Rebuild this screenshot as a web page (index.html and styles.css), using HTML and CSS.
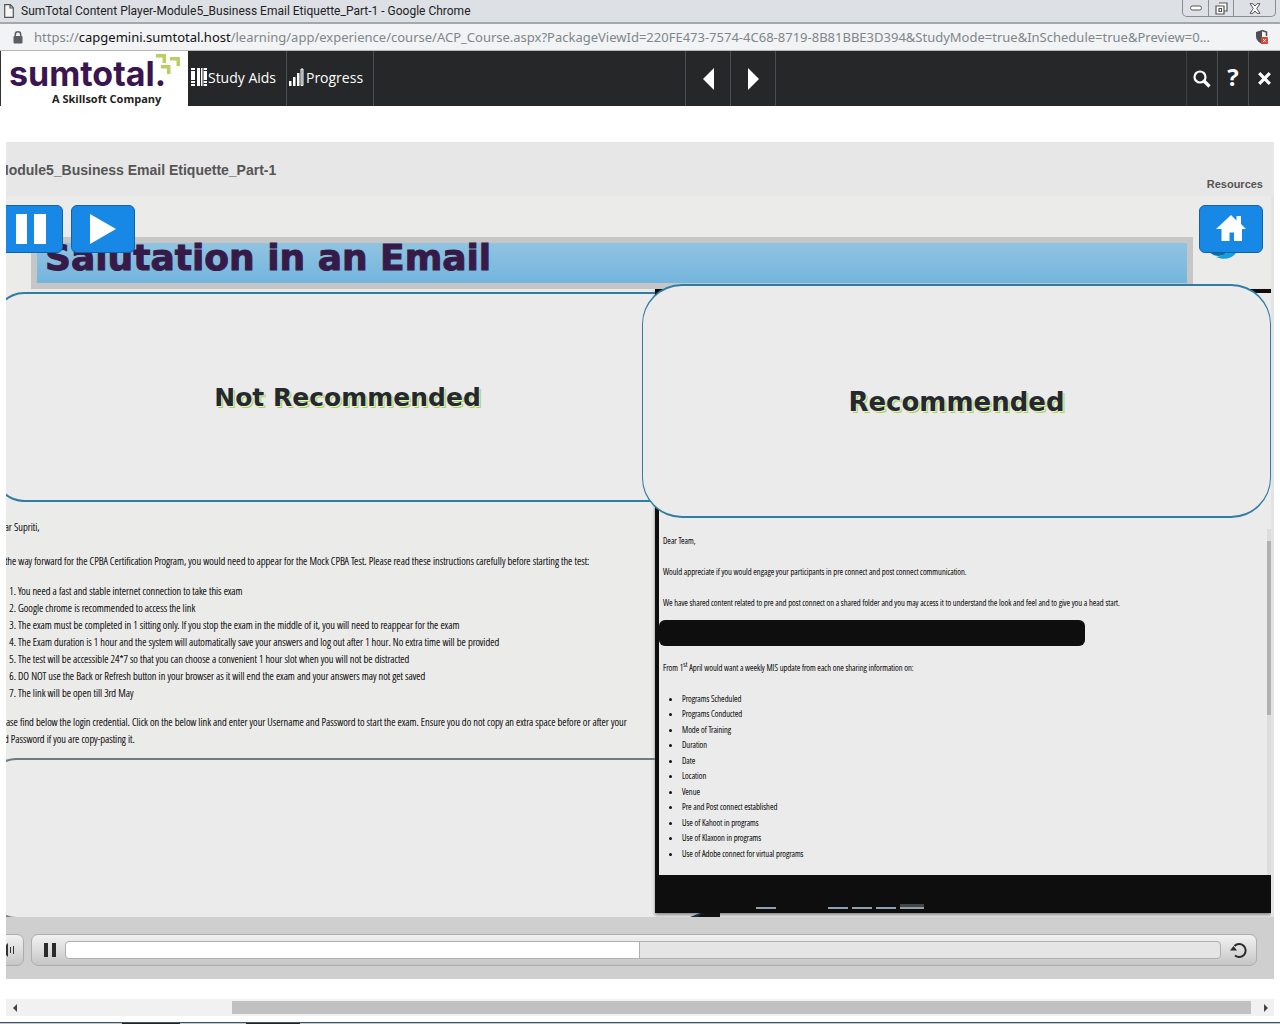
FILE: index.html
```html
<!DOCTYPE html>
<html lang="en">
<head>
<meta charset="utf-8">
<title>SumTotal Content Player-Module5_Business Email Etiquette_Part-1</title>
<link rel="stylesheet" href="styles.css">
</head>
<body>
<div class="window">
  <header class="titlebar">
    <svg class="page-icon" width="10" height="14" viewBox="0 0 10 14"><path d="M.7.7h5.6l3 3v9.6H.7z M6 .7v3.3h3.3" fill="#f6f6f6" stroke="#555" stroke-width="1.2"/></svg>
    <span class="window-title">SumTotal Content Player-Module5_Business Email Etiquette_Part-1 - Google Chrome</span>
    <div class="window-buttons">
      <button type="button" aria-label="Minimize"><svg width="12" height="6" viewBox="0 0 12 6"><rect x=".7" y="1" width="10.6" height="4" rx="1.5" fill="#fff" stroke="#555"/></svg></button>
      <button type="button" aria-label="Restore"><svg width="13" height="13" viewBox="0 0 13 13"><path d="M4 1h8v8H9M1 4h8v8H1zM4 6.500h2.500v3H4z" fill="#fff" stroke="#555" stroke-width="1.200"/></svg></button>
      <button type="button" class="wide" aria-label="Close window"><svg width="12" height="11" viewBox="0 0 12 11"><path d="M1 .7h3L6 3 8 .7h3L7.700 5.500 11 10.300H8L6 8l-2 2.300H1l3.300-4.800z" fill="#fff" stroke="#555"/></svg></button>
    </div>
  </header>

  <div class="address">
    <svg width="10" height="13" viewBox="0 0 10 13"><path d="M2.300 6V3.500a2.700 2.700 0 0 1 5.400 0V6" fill="none" stroke="#5a5d61" stroke-width="1.500"/><rect x=".5" y="5" width="9" height="7.500" rx="1" fill="#5a5d61"/></svg>
    <span class="url">https://<b>capgemini.sumtotal.host</b>/learning/app/experience/course/ACP_Course.aspx?PackageViewId=220FE473-7574-4C68-8719-8B81BBE3D394&amp;StudyMode=true&amp;InSchedule=true&amp;Preview=0...</span>
    <svg width="14" height="16" viewBox="0 0 14 16"><path d="M7 1 1 3v4c0 4 2.500 6 6 8z" fill="#4c4f53"/><path d="M7 1.500 11.500 3v4" fill="none" stroke="#4c4f53" stroke-width="1.500"/><rect x="6" y="8" width="7" height="7" rx="1" fill="#dc4437"/><path d="m8 10 3 3m0-3-3 3" stroke="#fff"/></svg>
  </div>

  <nav class="toolbar">
    <a class="brand" href="#" aria-label="SumTotal home">
      <span class="brand-name">sumtotal.</span>
      <span class="brand-sub">A Skillsoft Company</span>
      <svg class="brand-mark" width="26" height="22" viewBox="0 0 26 22"><path d="M1 1h10v9H7.500V4.500H1zM15 4h10v9h-3.500V7.500H15zM6 12h9.500v9H12v-5.500H6z" fill="#b9cf62"/></svg>
    </a>
    <button type="button" class="tool study"><svg width="17" height="18" viewBox="0 0 17 18"><path d="M0 0h4v18H0zM6 0h3v18H6zM10 0h1.500v18H10zM12.500 0h3.500v18h-3.500z" fill="#fff"/><path d="M0 2.500h4M0 12.500h4M0 15.500h4M12.500 2.500H16M12.500 12.500H16M12.500 15.500H16" stroke="#262729"/></svg>Study Aids</button>
    <button type="button" class="tool progress"><svg width="15" height="18" viewBox="0 0 15 18"><path d="M0 13h2.500v5H0zM4 9h2.500v9H4zM8 5h2.500v13H8z" fill="#fff"/><path d="M12 1h2v16.500h-2z" fill="#777" stroke="#fff"/></svg>Progress</button>
    <div class="pager">
      <button type="button" class="tool step" aria-label="Previous"><svg width="11" height="22" viewBox="0 0 11 22"><path d="M11 0v22L0 11z" fill="#fff"/></svg></button>
      <button type="button" class="tool step" aria-label="Next"><svg width="11" height="22" viewBox="0 0 11 22"><path d="M0 0v22l11-11z" fill="#fff"/></svg></button>
    </div>
    <div class="utilities">
      <button type="button" class="tool" aria-label="Search"><svg width="18" height="18" viewBox="0 0 18 18"><circle cx="7" cy="7" r="5.500" fill="none" stroke="#fff" stroke-width="2.200"/><path d="m11 11 5.500 5.500" stroke="#fff" stroke-width="3.200"/></svg></button>
      <button type="button" class="tool help" aria-label="Help">?</button>
      <button type="button" class="tool" aria-label="Close"><svg width="13" height="13" viewBox="0 0 13 13"><path d="m1.200 1.200 10.600 10.600m0-10.600L1.200 11.800" stroke="#fff" stroke-width="3.200"/></svg></button>
    </div>
  </nav>

  <main class="player">
    <div class="player-head">
      <h1>Module5_Business Email Etiquette_Part-1</h1>
      <a href="#">Resources</a>
    </div>

    <section class="slide">
      <h2 class="banner">Salutation in an Email</h2>
      <div class="columns">
        <article class="column left">
          <div class="card card-left"><h3>Not Recommended</h3></div>
          <div class="mail">
            <p class="cut">Dear Supriti,</p>
            <p class="cut as">As the way forward for the CPBA Certification Program, you would need to appear for the Mock CPBA Test. Please read these instructions carefully before starting the test:</p>
            <ol>
              <li>You need a fast and stable internet connection to take this exam</li>
              <li>Google chrome is recommended to access the link</li>
              <li>The exam must be completed in 1 sitting only. If you stop the exam in the middle of it, you will need to reappear for the exam</li>
              <li>The Exam duration is 1 hour and the system will automatically save your answers and log out after 1 hour. No extra time will be provided</li>
              <li>The test will be accessible 24*7 so that you can choose a convenient 1 hour slot when you will not be distracted</li>
              <li>DO NOT use the Back or Refresh button in your browser as it will end the exam and your answers may not get saved</li>
              <li>The link will be open till 3rd May</li>
            </ol>
            <p class="cut">Please find below the login credential. Click on the below link and enter your Username and Password to start the exam. Ensure you do not copy an extra space before or after your<br>and Password if you are copy-pasting it.</p>
          </div>
          <div class="card card-empty"></div>
        </article>
        <article class="column right">
          <div class="mail mail-right">
            <p>Dear Team,</p>
            <p>Would appreciate if you would engage your participants in pre connect and post connect communication.</p>
            <p>We have shared content related to pre and post connect on a shared folder and you may access it to understand the look and feel and to give you a head start.</p>
            <div class="redacted"></div>
            <p>From 1<sup>st</sup> April would want a weekly MIS update from each one sharing information on:</p>
            <ul>
              <li>Programs Scheduled</li>
              <li>Programs Conducted</li>
              <li>Mode of Training</li>
              <li>Duration</li>
              <li>Date</li>
              <li>Location</li>
              <li>Venue</li>
              <li>Pre and Post connect established</li>
              <li>Use of Kahoot in programs</li>
              <li>Use of Klaxoon in programs</li>
              <li>Use of Adobe connect for virtual programs</li>
            </ul>
            <div class="mail-scroll"><i></i></div>
          </div>
          <div class="taskbar"><i></i><i></i><i></i><i></i><i class="current"></i></div>
          <div class="card card-right"><h3>Recommended</h3></div>
        </article>
      </div>
      <svg class="corner" width="40" height="4" viewBox="0 0 40 4"><path d="M0 4 10 0h8v4z" fill="#12314f"/><path d="M8 4 12 0h18v4z" fill="#111"/></svg>
      <svg class="swirl" width="34" height="16" viewBox="0 0 34 16"><path d="M1 8c6 6 12 6 18 3l-4-6z" fill="#0c6ca5"/><path d="M9 14c8-1 10-6 21-6-3 7-12 10-21 6z" fill="#12a0dc"/></svg>
      <button type="button" class="over pause" aria-label="Pause"><svg width="30" height="30" viewBox="0 0 30 30"><path d="M0 0h11v30H0zM18 0h12v30H18z" fill="#fff"/></svg></button>
      <button type="button" class="over play" aria-label="Play"><svg width="26" height="30" viewBox="0 0 26 30"><path d="m0 0 26 15L0 30z" fill="#fff"/></svg></button>
      <button type="button" class="over home" aria-label="Home"><svg width="30" height="28" viewBox="0 0 30 28"><path d="M15 0 0 14h5.500v12h8v-8.500h4.500V26h8V14H30l-5-5V1h-4.500v4.500z" fill="#fff"/></svg></button>
    </section>

    <footer class="controls">
      <button type="button" class="volume" aria-label="Volume"><svg width="14" height="14" viewBox="0 0 14 14"><path d="M0 4h3l4-4v14l-4-4H0z" fill="#333"/><path d="M9.500 4v6M12.500 3v8" stroke="#333"/></svg></button>
      <div class="seekbar">
        <button type="button" aria-label="Pause"><svg width="12" height="15" viewBox="0 0 12 15"><path d="M0 0h4v14H0zM8 0h4v14H8z" fill="#2b2b2b"/></svg></button>
        <input type="range" min="0" max="1000" value="497" aria-label="Seek">
        <button type="button" aria-label="Replay"><svg width="18" height="17" viewBox="0 0 18 17"><path d="M4.500 4A6.500 6.500 0 1 1 5 13.500" fill="none" stroke="#2b2b2b" stroke-width="2"/><path d="M0 8.500 3.500 4 7 8.500z" fill="#2b2b2b"/></svg></button>
      </div>
    </footer>
  </main>

  <div class="hscroll">
    <button type="button" aria-label="Scroll left"><svg width="4" height="8" viewBox="0 0 4 8"><path d="M4 0v8L0 4z" fill="#444"/></svg></button>
    <div class="track"><div class="thumb"></div></div>
    <button type="button" aria-label="Scroll right"><svg width="4" height="8" viewBox="0 0 4 8"><path d="M0 0v8l4-4z" fill="#444"/></svg></button>
  </div>
  <div class="desktop-edge"></div>
</div>
</body>
</html>
```
FILE: styles.css
```css
* { box-sizing: border-box; }
body { margin: 0; background: #fff; font-family: "Open Sans", "Noto Sans", sans-serif; color: #222; }
button { margin: 0; padding: 0; border: 0; background: none; color: inherit; font: inherit; display: flex; align-items: center; justify-content: center; }
svg { display: block; flex: none; }
h1, h2, h3, p, ol, ul { margin: 0; padding: 0; }
.window { overflow: hidden; }

.titlebar { display: flex; align-items: center; height: 24px; padding: 0 4px; gap: 7px; background: #dde0e5; border-bottom: 2px solid #a5a8ab; }
.window-title { flex: 1; font: 12px Roboto, sans-serif; white-space: nowrap; }
.window-buttons { display: flex; align-self: flex-start; height: 17px; border: 1px solid #8b8e93; border-top: 0; border-radius: 0 0 5px 5px; }
.window-buttons button { width: 25px; }
.window-buttons button + button { border-left: 1px solid #8b8e93; }
.window-buttons .wide { width: 42px; }

.address { display: flex; align-items: center; height: 27px; padding: 0 11px 0 13px; gap: 11px; background: #f1f3f4; border-bottom: 1px solid #b6b8ba; }
.url { flex: 1; font: 13px "Noto Sans", sans-serif; color: #80868b; white-space: nowrap; }
.url b { font-weight: 400; color: #111; }

.toolbar { display: flex; height: 55px; background: #262729; color: #fff; font-size: 14px; }
.brand { position: relative; width: 188px; padding: 5px 0 0 8px; border-left: 1px solid #333; background: #fff; color: #3b1550; text-decoration: none; }
.brand-name { display: block; font: 700 34px/36px Inter, sans-serif; }
.brand-sub { display: block; padding-left: 43px; font: 700 11px/14px "Open Sans", sans-serif; color: #222; }
.brand-mark { position: absolute; right: 7px; top: 2px; }
.tool { border-right: 1px solid #4a4d52; padding-bottom: 3px; white-space: nowrap; }
.study { width: 99px; padding-right: 7px; }
.progress { width: 87px; gap: 2px; padding-right: 8px; }
.pager { display: flex; margin: 0 auto 0 311px; border-left: 1px solid #4a4d52; }
.step { width: 45px; padding: 0; }
.utilities { display: flex; border-left: 1px solid #3d4044; }
.utilities .tool { width: 31px; padding: 0; }
.utilities .tool:last-child { border: 0; }
.utilities .help { padding-bottom: 4px; font: 700 24px "Open Sans", sans-serif; }

.player { margin: 36px 6px 0; overflow: hidden; background: #e4e4e4; }
.player-head { display: flex; justify-content: space-between; height: 54px; padding: 20px 11px 0 0; background: #e7e7e7; font-family: "Liberation Sans", Arial, sans-serif; color: #555; }
.player-head h1 { margin-left: -9px; font-size: 14px; line-height: 16px; }
.player-head a { padding-top: 15px; font-size: 11px; line-height: 14px; font-weight: 700; color: #555; text-decoration: none; }

.slide { position: relative; overflow: hidden; margin-right: 3px; padding-top: 41px; background: #ebebea; }
.banner { height: 52px; margin: 0 78px 0 25px; padding-left: 8px; border: 6px solid #c6c6c6; background: linear-gradient(#90c3e1, #74b5de); font: 700 36px/30px "DejaVu Sans", sans-serif; color: #361a47; -webkit-text-stroke: 1px #361a47; }
.columns { display: grid; grid-template-columns: 649fr 616fr; }
.column { min-width: 0; }
.card { border: 2px solid #2f7da5; background: #ebebeb; display: flex; align-items: center; justify-content: center; }
.card h3 { font-family: "DejaVu Sans", sans-serif; color: #25292d; text-shadow: 1px 1px #ebebeb, 2px 2px #a5d63f; }
.card-left { height: 210px; margin: 3px 0 0 -12px; border-radius: 30px 0 0 30px; border-right: 0; }
.card-left h3 { font-size: 25px; padding-left: 44px; }
.mail { font: 300 11px/17px "Open Sans Condensed Light", "Roboto Condensed", "Liberation Sans Narrow", sans-serif; color: #111; text-shadow: 0 0 #333; white-space: nowrap; }
.left .mail { height: 256px; overflow: hidden; padding-top: 16px; }
.left p { margin-bottom: 17px; }
.left .as { margin-bottom: 13px; }
.cut { margin-left: -11px; }
.left ol { display: flex; flex-direction: column; height: 118px; margin-bottom: 13px; padding-left: 12px; }
.mail li { flex: 1; }
.card-empty { height: 161px; margin: 0 0 -2px -18px; border-color: #6f7a80; border-right: 0; border-radius: 28px 0 0 28px; }

.right { position: relative; padding: 4px 0 0 4px; margin-bottom: 4px; background: #0e0e0e; box-shadow: 0 2px 3px #888; }
.mail-right { position: relative; height: 582px; padding: 240px 0 0 4px; background: #ebebeb; font-size: 9px; line-height: 15px; }
.mail-right p { margin-bottom: 16px; }
.redacted { width: 70%; height: 26px; margin: -6px 0 14px -4px; border-radius: 6px; background: #0e0e0e; }
.mail-right ul { display: flex; flex-direction: column; height: 170px; padding-left: 19px; }
.mail sup { font-size: 8px; line-height: 0; }
.mail-scroll { position: absolute; right: 0; top: 236px; bottom: 0; width: 4px; padding-top: 12px; background: #dcdcdc; }
.mail-scroll i { display: block; height: 174px; background: #b0b0b0; }
.taskbar { display: flex; align-items: flex-end; gap: 4px; height: 38px; padding: 0 0 4px 121px; }
.taskbar i { width: 20px; height: 2px; background: #8fa1b1; }
.taskbar i:first-child { margin-left: -24px; margin-right: 48px; }
.taskbar .current { width: 24px; height: 5px; background: #454545; border-bottom: 2px solid #8fa1b1; }
.card-right { position: absolute; left: -13px; right: 0; top: -5px; height: 234px; border-width: 2px 1px; border-radius: 40px; }
.card-right h3 { font-size: 26px; padding-top: 2px; }
.corner { position: absolute; left: 684px; bottom: 0; }
.swirl { position: absolute; right: 30px; top: 47px; }

.over { position: absolute; top: 9px; width: 64px; height: 48px; border: 1px solid #1262a8; border-radius: 6px; background: #1888e7; }
.pause { left: -7px; }
.play { left: 65px; }
.home { right: 8px; }

.controls { display: flex; gap: 7px; height: 62px; padding: 17px 17px 13px 0; background: #cfcfcf; }
.volume, .seekbar { border: 1px solid #adadad; background: linear-gradient(#f2f2f2, #c6c6c6); border-radius: 7px; }
.volume { width: 30px; margin-left: -12px; padding-right: 3px; }
.seekbar { flex: 1; display: flex; align-items: center; padding: 0 8px 0 12px; gap: 9px; }
.seekbar input { flex: 1; min-width: 0; height: 18px; margin: 0; appearance: none; border: 1px solid #b0b0b0; border-radius: 4px; background: linear-gradient(#fff, #fff) 0 0 / 49.7% 100% no-repeat #e5e5e5; }
.seekbar input::-webkit-slider-thumb { appearance: none; width: 1px; height: 16px; background: #b0b0b0; }

.hscroll { display: flex; height: 17px; margin: 20px 6px 0; background: #f1f1f1; }
.hscroll button { width: 17px; }
.track { flex: 1; padding: 2px 6px 2px 0; }
.thumb { width: 83%; height: 13px; margin-left: auto; background: #c1c1c1; }
.desktop-edge { height: 2px; margin-top: 6px; background: linear-gradient(90deg, #b9c9d6 122px, #222 0 180px, #b9c9d6 0 246px, #222 0 300px, #b9c9d6 0); border-top: 1px solid #46525d; }
```
